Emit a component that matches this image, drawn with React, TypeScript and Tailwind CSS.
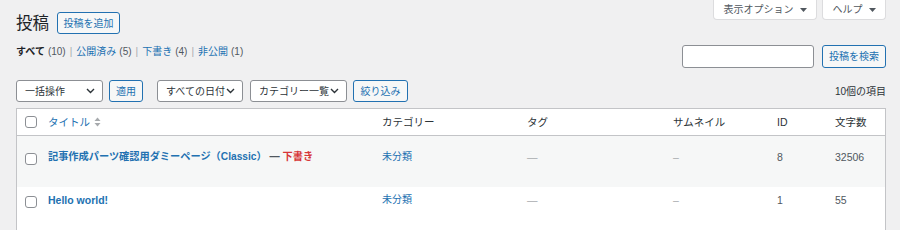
import React from "react";

const font = { fontFamily: '"Liberation Sans", "Noto Sans CJK JP", sans-serif' };

function Chevron() {
  return (
    <svg width="9" height="6" viewBox="0 0 9 6" className="shrink-0">
      <polyline points="1,1 4.5,4.5 8,1" fill="none" stroke="#2c3338" strokeWidth="1.4" />
    </svg>
  );
}

function Tri() {
  return (
    <svg width="7" height="4" viewBox="0 0 7 4" className="shrink-0">
      <polygon points="0,0 7,0 3.5,4" fill="#50575e" />
    </svg>
  );
}

function SortArrows() {
  return (
    <svg width="7" height="10" viewBox="0 0 7 10" className="shrink-0">
      <polygon points="0.5,4 6.5,4 3.5,0.5" fill="#a7aaad" />
      <polygon points="0.5,6 6.5,6 3.5,9.5" fill="#a7aaad" />
    </svg>
  );
}

function Cb() {
  return <div className="w-[12px] h-[12px] rounded-[3px] border border-[#8c8f94] bg-white" />;
}

function Select({ label, w }: { label: string; w: string }) {
  return (
    <div className={`${w} h-[22px] flex items-center justify-between whitespace-nowrap pl-[8px] pr-[7px] bg-white border border-[#8c8f94] rounded-[3px] text-[10px] text-[#2c3338]`}>
      <span>{label}</span>
      <Chevron />
    </div>
  );
}

function SecBtn({ label, w }: { label: string; w: string }) {
  return (
    <div className={`${w} h-[22px] flex items-center justify-center whitespace-nowrap bg-[#f6f7f7] border border-[#2271b1] rounded-[3px] text-[10px] text-[#2271b1]`}>
      {label}
    </div>
  );
}

export default function App() {
  return (
    <div style={font} className="w-[900px] h-[230px] overflow-hidden bg-[#f0f0f1] pl-4 pr-[14px] text-[#2c3338]">
      {/* top */}
      <div className="flex justify-between h-[68px]">
        <div className="pt-[12px]">
          <div className="flex items-center h-[22px] gap-[8px]">
            <h1 className="text-[16.5px] leading-[22px] font-normal text-[#1d2327]">投稿</h1>
            <div className="w-[63px] h-[22px] flex items-center justify-center border border-[#2271b1] rounded-[3px] bg-[#f6f7f7] text-[10px] text-[#2271b1]">
              投稿を追加
            </div>
          </div>
          <div className="mt-[11px] flex items-center whitespace-nowrap text-[10px] leading-[14px] text-[#50575e]">
            <span className="font-bold text-[#1d2327]">すべて</span>
            <span className="ml-[3px]">(10)</span>
            <span className="mx-[4px] text-[#a7aaad]">|</span>
            <span className="text-[#2271b1]">公開済み</span>
            <span className="ml-[3px]">(5)</span>
            <span className="mx-[4px] text-[#a7aaad]">|</span>
            <span className="text-[#2271b1]">下書き</span>
            <span className="ml-[3px]">(4)</span>
            <span className="mx-[4px] text-[#a7aaad]">|</span>
            <span className="text-[#2271b1]">非公開</span>
            <span className="ml-[3px]">(1)</span>
          </div>
        </div>
        <div className="flex flex-col items-end">
          <div className="flex gap-[5px] h-[20px]">
            <div className="w-[104px] h-[20px] flex items-center justify-center gap-[6px] whitespace-nowrap bg-white border border-t-0 border-[#dcdcde] rounded-b-[4px] text-[10px] text-[#50575e]">
              <span>表示オプション</span>
              <Tri />
            </div>
            <div className="w-[64px] h-[20px] flex items-center justify-center gap-[6px] whitespace-nowrap bg-white border border-t-0 border-[#dcdcde] rounded-b-[4px] text-[10px] text-[#50575e]">
              <span>ヘルプ</span>
              <Tri />
            </div>
          </div>
          <div className="mt-[25px] flex gap-[8px]">
            <div className="w-[132px] h-[23px] bg-white border border-[#8c8f94] rounded-[3px]" />
            <SecBtn label="投稿を検索" w="w-[64px] h-[23px]" />
          </div>
        </div>
      </div>

      {/* toolbar */}
      <div className="mt-[12px] flex items-center h-[22px]">
        <Select label="一括操作" w="w-[87px]" />
        <div className="ml-[6px]">
          <SecBtn label="適用" w="w-[34px]" />
        </div>
        <div className="ml-[14px]">
          <Select label="すべての日付" w="w-[86px]" />
        </div>
        <div className="ml-[7px]">
          <Select label="カテゴリー一覧" w="w-[97px]" />
        </div>
        <div className="ml-[6px]">
          <SecBtn label="絞り込み" w="w-[55px]" />
        </div>
        <div className="ml-auto text-[10px] text-[#2c3338] whitespace-nowrap">10個の項目</div>
      </div>

      {/* table */}
      <div className="mt-[6px] bg-white border border-[#c3c4c7] h-[200px] text-[10.5px] leading-[14px] whitespace-nowrap">
        <div className="grid grid-cols-[23px_334px_145px_146px_104px_58px_1fr] h-[27px] border-b border-[#c3c4c7] items-center">
          <div className="pl-[8px] flex"><Cb /></div>
          <div className="pl-[8px] flex items-center gap-[4px] text-[#2271b1]">
            <span>タイトル</span>
            <SortArrows />
          </div>
          <div className="pl-[8px]">カテゴリー</div>
          <div className="pl-[8px]">タグ</div>
          <div className="pl-[8px]">サムネイル</div>
          <div className="pl-[8px]">ID</div>
          <div className="pl-[8px]">文字数</div>
        </div>
        <div className="grid grid-cols-[23px_334px_145px_146px_104px_58px_1fr] h-[51px] bg-[#f6f7f7] text-[#50575e]">
          <div className="pl-[8px] pt-[17px]"><Cb /></div>
          <div className="pl-[8px] pt-[14px] text-[10.2px]">
            <span className="font-bold text-[#2271b1]">記事作成パーツ確認用ダミーページ（Classic）</span>
            <span className="font-bold text-[#50575e]"> — </span>
            <span className="font-bold text-[#d63638]">下書き</span>
          </div>
          <div className="pl-[8px] pt-[14px] text-[10px] text-[#2271b1]">未分類</div>
          <div className="pl-[8px] pt-[14px] text-[#a7aaad]">—</div>
          <div className="pl-[8px] pt-[14px] text-[#a7aaad]">–</div>
          <div className="pl-[8px] pt-[14px]">8</div>
          <div className="pl-[8px] pt-[14px]">32506</div>
        </div>
        <div className="grid grid-cols-[23px_334px_145px_146px_104px_58px_1fr] h-[51px] text-[#50575e]">
          <div className="pl-[8px] pt-[9px]"><Cb /></div>
          <div className="pl-[8px] pt-[6px] font-bold text-[#2271b1]">Hello world!</div>
          <div className="pl-[8px] pt-[6px] text-[10px] text-[#2271b1]">未分類</div>
          <div className="pl-[8px] pt-[6px] text-[#a7aaad]">—</div>
          <div className="pl-[8px] pt-[6px] text-[#a7aaad]">–</div>
          <div className="pl-[8px] pt-[6px]">1</div>
          <div className="pl-[8px] pt-[6px]">55</div>
        </div>
      </div>
    </div>
  );
}
